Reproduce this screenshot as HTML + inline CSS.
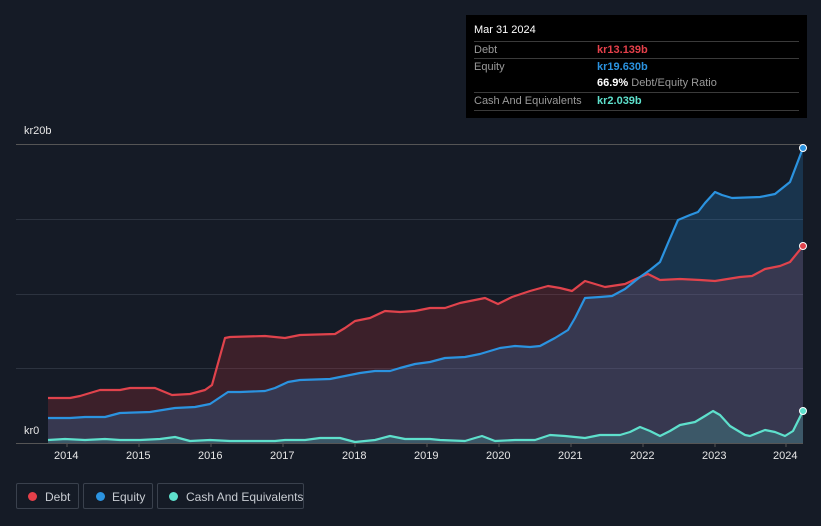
<!DOCTYPE html>
<html><head><meta charset="utf-8"><style>
body{margin:0;width:821px;height:526px;background:#151b26;font-family:"Liberation Sans",sans-serif;overflow:hidden;position:relative}
.tt{position:absolute;left:466px;top:15px;width:341px;height:103px;background:#000;color:#fff;font-size:11px}
.tt .r{position:absolute;left:8px;width:325px;border-top:1px solid #3a3a3a;height:17px;line-height:17px}
.tt .l{color:#9a9a9a}
.tt .v{position:absolute;left:123px;top:0;font-weight:bold}
.leg{position:absolute;top:483px;height:26px;border:1px solid #3a414d;border-radius:2px;color:#c8ccd2;font-size:12px;line-height:26px;box-sizing:border-box;white-space:nowrap}
.leg i{position:absolute;top:8px;width:9px;height:9px;border-radius:50%}
.ax{position:absolute;color:#e6e6e6;font-size:11px}
</style></head><body>
<svg width="821" height="526" style="position:absolute;left:0;top:0">
<g stroke="#2c333f" stroke-width="1">
<line x1="16" y1="144.5" x2="803" y2="144.5" stroke="#555"/>
<line x1="16" y1="219.5" x2="803" y2="219.5"/>
<line x1="16" y1="294.5" x2="803" y2="294.5"/>
<line x1="16" y1="368.5" x2="803" y2="368.5"/>
<line x1="16" y1="443.5" x2="803" y2="443.5" stroke="#555"/>
</g>
<polygon fill="rgba(200,50,60,0.22)" points="48,443 48,398 70,398 80,396 100,390 120,390 130,388 155,388 172,395 190,394 205,390 212,385 225,338 230,337 265,336 285,338 300,335 335,334 345,328 355,321 370,318 385,311 400,312 415,311 430,308 445,308 460,303 470,301 485,298 498,304 512,297 530,291 548,286 560,288 572,291 585,281 595,284 605,287 625,284 640,277 648,274 660,280 680,279 700,280 715,281 740,277 752,276 765,269 780,266 790,262 803,246 803,443"/>
<polygon fill="rgba(40,140,220,0.22)" points="48,443 48,418 70,418 85,417 105,417 120,413 150,412 175,408 195,407 210,404 228,392 240,392 265,391 275,388 288,382 300,380 330,379 345,376 360,373 375,371 390,371 400,368 415,364 430,362 445,358 465,357 480,354 500,348 515,346 530,347 540,346 555,338 568,330 575,318 585,298 600,297 612,296 625,289 640,277 650,270 660,262 668,243 678,220 690,215 698,212 705,203 715,192 722,195 732,198 760,197 775,194 790,182 803,148 803,443"/>
<polygon fill="rgba(80,220,200,0.2)" points="48,443 48,440 65,439 85,440 105,439 120,440 140,440 160,439 175,437 190,441 210,440 230,441 260,441 275,441 285,440 305,440 320,438 340,438 355,442 375,440 390,436 405,439 430,439 440,440 465,441 475,438 482,436 495,441 515,440 535,440 550,435 565,436 585,438 600,435 620,435 630,432 640,427 650,431 660,436 670,431 680,425 695,422 705,416 713,411 720,415 730,426 745,435 750,436 765,430 775,432 785,436 793,431 803,411 803,443"/>
<g fill="none" stroke-width="2.2" stroke-linejoin="round">
<polyline stroke="#e0434c" points="48,398 70,398 80,396 100,390 120,390 130,388 155,388 172,395 190,394 205,390 212,385 225,338 230,337 265,336 285,338 300,335 335,334 345,328 355,321 370,318 385,311 400,312 415,311 430,308 445,308 460,303 470,301 485,298 498,304 512,297 530,291 548,286 560,288 572,291 585,281 595,284 605,287 625,284 640,277 648,274 660,280 680,279 700,280 715,281 740,277 752,276 765,269 780,266 790,262 803,246"/>
<polyline stroke="#2b93e0" points="48,418 70,418 85,417 105,417 120,413 150,412 175,408 195,407 210,404 228,392 240,392 265,391 275,388 288,382 300,380 330,379 345,376 360,373 375,371 390,371 400,368 415,364 430,362 445,358 465,357 480,354 500,348 515,346 530,347 540,346 555,338 568,330 575,318 585,298 600,297 612,296 625,289 640,277 650,270 660,262 668,243 678,220 690,215 698,212 705,203 715,192 722,195 732,198 760,197 775,194 790,182 803,148"/>
<polyline stroke="#5ee0cc" points="48,440 65,439 85,440 105,439 120,440 140,440 160,439 175,437 190,441 210,440 230,441 260,441 275,441 285,440 305,440 320,438 340,438 355,442 375,440 390,436 405,439 430,439 440,440 465,441 475,438 482,436 495,441 515,440 535,440 550,435 565,436 585,438 600,435 620,435 630,432 640,427 650,431 660,436 670,431 680,425 695,422 705,416 713,411 720,415 730,426 745,435 750,436 765,430 775,432 785,436 793,431 803,411"/>
</g>
<circle cx="803" cy="148" r="3.5" fill="#2b93e0" stroke="#fff" stroke-width="1"/>
<circle cx="803" cy="246" r="3.5" fill="#e0434c" stroke="#fff" stroke-width="1"/>
<circle cx="803" cy="411" r="3.5" fill="#5ee0cc" stroke="#fff" stroke-width="1"/>
<g stroke="#555"><line x1="67" y1="443" x2="67" y2="447"/><line x1="139" y1="443" x2="139" y2="447"/><line x1="211" y1="443" x2="211" y2="447"/><line x1="283" y1="443" x2="283" y2="447"/><line x1="355" y1="443" x2="355" y2="447"/><line x1="427" y1="443" x2="427" y2="447"/><line x1="499" y1="443" x2="499" y2="447"/><line x1="571" y1="443" x2="571" y2="447"/><line x1="643" y1="443" x2="643" y2="447"/><line x1="715" y1="443" x2="715" y2="447"/><line x1="786" y1="443" x2="786" y2="447"/></g>
</svg>
<div class="ax" style="left:24px;top:125px">kr20b</div>
<div class="ax" style="left:24px;top:425px">kr0</div>
<div class="ax" style="left:54px;top:450px">2014</div><div class="ax" style="left:126px;top:450px">2015</div><div class="ax" style="left:198px;top:450px">2016</div><div class="ax" style="left:270px;top:450px">2017</div><div class="ax" style="left:342px;top:450px">2018</div><div class="ax" style="left:414px;top:450px">2019</div><div class="ax" style="left:486px;top:450px">2020</div><div class="ax" style="left:558px;top:450px">2021</div><div class="ax" style="left:630px;top:450px">2022</div><div class="ax" style="left:702px;top:450px">2023</div><div class="ax" style="left:773px;top:450px">2024</div>
<div class="tt">
<div style="position:absolute;left:8px;top:9px;font-size:11px">Mar 31 2024</div>
<div class="r" style="top:26px"><span class="l">Debt</span><span class="v" style="color:#e5404a">kr13.139b</span></div>
<div class="r" style="top:43px"><span class="l">Equity</span><span class="v" style="color:#2b93e0">kr19.630b</span></div>
<div class="r" style="top:60px;border-top:none"><span class="v" style="color:#fff">66.9% <span style="color:#9a9a9a;font-weight:normal">Debt/Equity Ratio</span></span></div>
<div class="r" style="top:77px"><span class="l">Cash And Equivalents</span><span class="v" style="color:#5ee0cc">kr2.039b</span></div>
<div class="r" style="top:95px;height:0"></div>
</div>
<div class="leg" style="left:16px;width:63px"><i style="left:11px;background:#e5404a"></i><span style="position:absolute;left:28px">Debt</span></div>
<div class="leg" style="left:83px;width:70px"><i style="left:12px;background:#2b93e0"></i><span style="position:absolute;left:28px">Equity</span></div>
<div class="leg" style="left:157px;width:147px"><i style="left:11px;background:#5ee0cc"></i><span style="position:absolute;left:28px">Cash And Equivalents</span></div>
</body></html>
